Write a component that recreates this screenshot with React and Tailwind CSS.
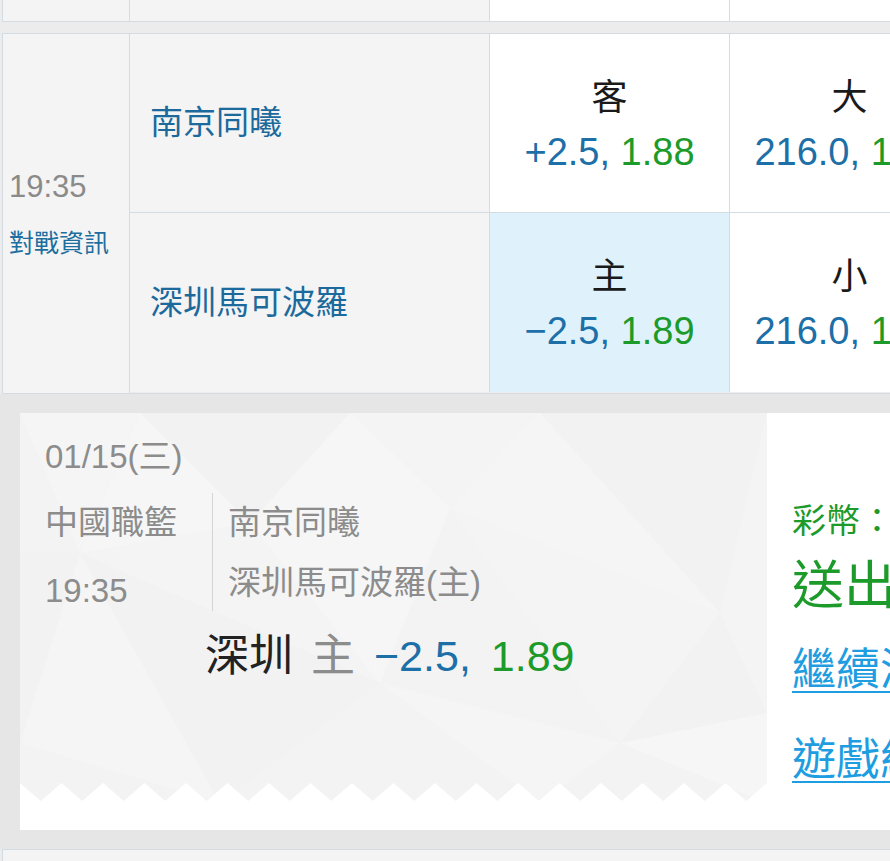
import React from "react";

const FONT = "font-['Liberation_Sans','Noto_Sans_CJK_TC',sans-serif]";

// zigzag edge at the bottom of the ticket
function Zigzag({ width = 747, period = 41.5, depth = 18 }) {
  const pts = ["0,0"];
  for (let x = 0; x < width + period; x += period) {
    pts.push(`${x + period / 2},${depth}`);
    pts.push(`${x + period},0`);
  }
  pts.push(`${width + period},${depth + 2}`);
  pts.push(`0,${depth + 2}`);
  return (
    <svg
      className="absolute left-0 bottom-0"
      width={width}
      height={depth + 2}
      viewBox={`0 0 ${width} ${depth + 2}`}
    >
      <polygon points={pts.join(" ")} fill="#ffffff" />
    </svg>
  );
}

function Texture() {
  const tris = [
    ["0,0 120,0 60,140", "#f5f5f5"],
    ["120,0 330,0 230,110", "#f2f2f2"],
    ["60,140 230,110 120,0", "#f6f6f6"],
    ["330,0 520,0 430,95", "#f4f4f4"],
    ["230,110 430,95 330,0", "#f6f6f6"],
    ["520,0 747,0 700,200", "#f2f2f2"],
    ["430,95 700,200 520,0", "#f5f5f5"],
    ["0,140 60,140 0,330", "#f2f2f2"],
    ["60,140 360,270 230,110", "#f4f4f4"],
    ["230,110 360,270 430,95", "#f6f6f6"],
    ["430,95 700,200 600,330", "#f4f4f4"],
    ["0,330 60,140 200,390", "#f5f5f5"],
    ["60,140 360,270 200,390", "#f2f2f2"],
    ["360,270 600,330 520,390", "#f5f5f5"],
    ["200,390 360,270 520,390", "#f3f3f3"],
    ["600,330 747,300 747,390", "#f6f6f6"],
    ["700,200 747,300 600,330", "#f2f2f2"],
    ["700,200 747,0 747,300", "#f4f4f4"],
  ];
  return (
    <svg className="absolute inset-0" width="747" height="390" viewBox="0 0 747 390">
      <rect width="747" height="390" fill="#f3f3f3" />
      {tris.map(([p, c], i) => (
        <polygon key={i} points={p} fill={c} />
      ))}
    </svg>
  );
}

function Odds({ label, a, b, highlight }) {
  return (
    <div
      className={`w-[240px] shrink-0 border-r border-[#d3dce3] flex flex-col items-center justify-center pt-[4px] ${
        highlight ? "bg-[#dff2fc]" : "bg-white"
      }`}
    >
      <div className="text-[36px] leading-[44px] text-[#1a1a1a]">{label}</div>
      <div className="mt-[9px] text-[38px] leading-[46px] whitespace-nowrap">
        <span className="text-[#1d6fa8]">{a}, </span>
        <span className="text-[#1c9a2a]">{b}</span>
      </div>
    </div>
  );
}

export default function App() {
  return (
    <div className={`w-[890px] h-[861px] overflow-hidden bg-[#e6e6e6] ${FONT}`}>
      {/* previous row (cut off) */}
      <div className="flex h-[22px] pl-[2px] bg-[#ececec]">
        <div className="w-[128px] shrink-0 bg-[#f4f4f4] border-l border-r border-b border-[#d3dce3]" />
        <div className="w-[360px] shrink-0 bg-[#f4f4f4] border-r border-b border-[#d3dce3]" />
        <div className="w-[240px] shrink-0 bg-white border-r border-b border-[#d3dce3]" />
        <div className="w-[240px] shrink-0 bg-white border-b border-[#d3dce3]" />
      </div>
      <div className="h-[11px] bg-[#ececec]" />

      {/* match row */}
      <div className="flex pl-[2px] bg-[#ececec]">
        <div className="w-[128px] h-[361px] shrink-0 bg-[#f4f4f4] border border-[#d3dce3] flex flex-col justify-center pl-[6px]">
          <div className="text-[31px] leading-[40px] text-[#8a8a8a]">19:35</div>
          <div className="mt-[19px] text-[25px] leading-[34px] text-[#1d6fa0]">對戰資訊</div>
        </div>
        <div className="flex flex-col border-t border-b border-[#d3dce3]">
          <div className="flex h-[179px] border-b border-[#d3dce3]">
            <div className="w-[360px] shrink-0 bg-[#f4f4f4] border-r border-[#d3dce3] flex items-center pl-[20px] text-[33px] text-[#1c6a9c]">
              南京同曦
            </div>
            <Odds label="客" a="+2.5" b="1.88" />
            <Odds label="大" a="216.0" b="1.90" />
          </div>
          <div className="flex h-[179px]">
            <div className="w-[360px] shrink-0 bg-[#f4f4f4] border-r border-[#d3dce3] flex items-center pl-[20px] text-[33px] text-[#1c6a9c]">
              深圳馬可波羅
            </div>
            <Odds label="主" a="−2.5" b="1.89" highlight />
            <Odds label="小" a="216.0" b="1.86" />
          </div>
        </div>
      </div>

      <div className="h-[19px]" />

      {/* bet ticket */}
      <div className="ml-[20px] h-[417px] bg-white flex">
        <div className="relative w-[747px] h-[390px] shrink-0 overflow-hidden">
          <Texture />
          <Zigzag />
          <div className="relative pl-[25px] pt-[24px] text-[#8c8c8c]">
            <div className="text-[33px] leading-[40px]">01/15(三)</div>
            <div className="mt-[16px] flex">
              <div className="w-[167px] shrink-0">
                <div className="text-[33px] leading-[60px]">中國職籃</div>
                <div className="mt-[8px] text-[33px] leading-[60px]">19:35</div>
              </div>
              <div className="w-px h-[118px] bg-[#d4d4d4]" />
              <div className="pl-[15px]">
                <div className="text-[33px] leading-[60px]">南京同曦</div>
                <div className="text-[33px] leading-[60px]">深圳馬可波羅(主)</div>
              </div>
            </div>
            <div className="mt-[6px] ml-[160px] flex items-center h-[58px] whitespace-nowrap">
              <span className="text-[44px] text-[#222]">深圳</span>
              <span className="ml-[18px] text-[44px] text-[#8c8c8c]">主</span>
              <span className="ml-[19px] text-[43px] text-[#1d6fa8]">−2.5,</span>
              <span className="ml-[20px] text-[43px] text-[#1c9a2a]">1.89</span>
            </div>
          </div>
        </div>
        <div className="flex-1 pl-[25px] pt-[88px] whitespace-nowrap">
          <div className="text-[34px] leading-[40px] text-[#1c9a2a]">彩幣：500</div>
          <div className="mt-[15px] text-[52px] leading-[60px] text-[#1c9a2a]">送出成功</div>
          <div className="mt-[26px] text-[44px] leading-[56px] text-[#1e9de0] underline underline-offset-[6px] decoration-2">
            繼續添加
          </div>
          <div className="mt-[34px] text-[44px] leading-[56px] text-[#1e9de0] underline underline-offset-[6px] decoration-2">
            遊戲紀錄
          </div>
        </div>
      </div>

      <div className="h-[19px]" />
      <div className="pl-[2px] bg-[#ececec]">
        <div className="h-[20px] bg-[#f4f4f4] border-l border-t border-[#d3dce3]" />
      </div>
    </div>
  );
}
